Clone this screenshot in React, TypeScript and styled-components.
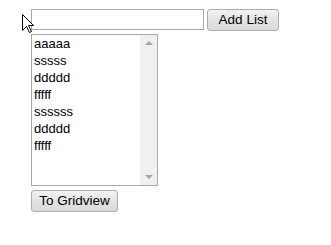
import styled, { createGlobalStyle } from "styled-components";

const GlobalStyle = createGlobalStyle`
  html, body {
    margin: 0;
    padding: 0;
    background: #ffffff;
  }
  body {
    font-family: "Liberation Sans", Arial, sans-serif;
    font-size: 13px;
    color: #000;
  }
`;

const Page = styled.div`
  position: relative;
  width: 331px;
  height: 245px;
  box-sizing: border-box;
  padding: 9px 0 0 31px;
  display: flex;
  flex-direction: column;
  align-items: flex-start;
`;

const TopRow = styled.div`
  display: flex;
  align-items: flex-start;
  gap: 3px;
`;

const TextBox = styled.input`
  box-sizing: border-box;
  width: 173px;
  height: 21px;
  margin: 0;
  border: 1px solid #a9a9a9;
  padding: 0 2px;
  font: inherit;
  outline: none;
`;

const Button = styled.button<{ $width: number }>`
  box-sizing: border-box;
  width: ${(p) => p.$width}px;
  height: 22px;
  margin: 0;
  padding: 0;
  border: 1px solid #acacac;
  border-radius: 3px;
  background: linear-gradient(#f2f2f2, #e3e3e3 50%, #dadada);
  font-family: "Liberation Sans", Arial, sans-serif;
  font-size: 13.5px;
  color: #000;
  line-height: 20px;
`;

const ListBox = styled.div`
  box-sizing: border-box;
  margin-top: 3px;
  width: 127px;
  height: 152px;
  border: 1px solid #a9a9a9;
  display: flex;
`;

const Items = styled.div`
  flex: 1;
  padding: 0 0 0 2px;
`;

const Item = styled.div`
  line-height: 17px;
  height: 17px;
`;

const ScrollTrack = styled.div`
  width: 17px;
  background: #f0f0f0;
  display: flex;
  flex-direction: column;
  justify-content: space-between;
  align-items: center;
  padding: 6px 0;
`;

const Arrow = styled.div<{ $up?: boolean }>`
  width: 0;
  height: 0;
  border-left: 4px solid transparent;
  border-right: 4px solid transparent;
  ${(p) =>
    p.$up
      ? "border-bottom: 4px solid #a3a3a3;"
      : "border-top: 4px solid #a3a3a3;"}
`;

const BottomRow = styled.div`
  margin-top: 4px;
`;

const Cursor = styled.svg`
  position: absolute;
  left: 22px;
  top: 14px;
`;

const items = ["aaaaa", "sssss", "ddddd", "fffff", "ssssss", "ddddd", "fffff"];

export default function App() {
  return (
    <>
      <GlobalStyle />
      <Page>
        <TopRow>
          <TextBox type="text" />
          <Button $width={72}>Add List</Button>
        </TopRow>
        <ListBox>
          <Items>
            {items.map((t, i) => (
              <Item key={i}>{t}</Item>
            ))}
          </Items>
          <ScrollTrack>
            <Arrow $up />
            <Arrow />
          </ScrollTrack>
        </ListBox>
        <BottomRow>
          <Button $width={87}>To Gridview</Button>
        </BottomRow>
        <Cursor width="13" height="20" viewBox="0 0 13 20">
          <path
            d="M0.5 0.5 L0.5 16.5 L4.5 12.5 L7.5 18.5 L9.5 17.5 L6.5 11.5 L11.5 11.5 Z"
            fill="#ffffff"
            stroke="#000000"
            strokeWidth="1"
            strokeLinejoin="miter"
          />
        </Cursor>
      </Page>
    </>
  );
}
